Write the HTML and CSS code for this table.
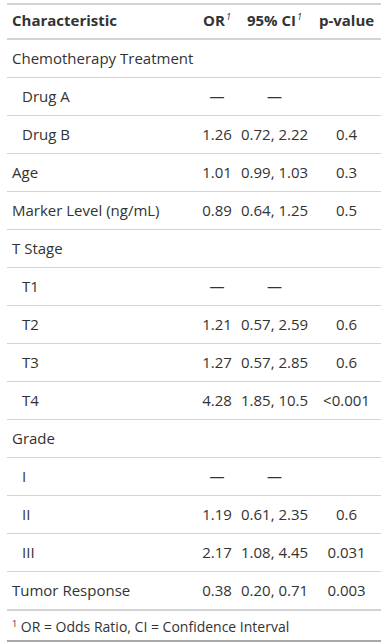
FILE: index.html
```html
<!DOCTYPE html>
<html>
<head>
<meta charset="utf-8">
<link rel="stylesheet" href="styles.css">
</head>
<body>
<table class="gt">
  <colgroup>
    <col class="c-label"><col class="c-or"><col class="c-ci"><col class="c-p">
  </colgroup>
  <thead>
    <tr>
      <th class="left">Characteristic</th>
      <th>OR<sup class="fm">1</sup></th>
      <th>95% CI<sup class="fm">1</sup></th>
      <th>p-value</th>
    </tr>
  </thead>
  <tbody>
    <tr><td class="left">Chemotherapy Treatment</td><td></td><td></td><td></td></tr>
    <tr><td class="left ind">Drug A</td><td>—</td><td>—</td><td></td></tr>
    <tr><td class="left ind">Drug B</td><td>1.26</td><td>0.72, 2.22</td><td>0.4</td></tr>
    <tr><td class="left">Age</td><td>1.01</td><td>0.99, 1.03</td><td>0.3</td></tr>
    <tr><td class="left">Marker Level (ng/mL)</td><td>0.89</td><td>0.64, 1.25</td><td>0.5</td></tr>
    <tr><td class="left">T Stage</td><td></td><td></td><td></td></tr>
    <tr><td class="left ind">T1</td><td>—</td><td>—</td><td></td></tr>
    <tr><td class="left ind">T2</td><td>1.21</td><td>0.57, 2.59</td><td>0.6</td></tr>
    <tr><td class="left ind">T3</td><td>1.27</td><td>0.57, 2.85</td><td>0.6</td></tr>
    <tr><td class="left ind">T4</td><td>4.28</td><td>1.85, 10.5</td><td>&lt;0.001</td></tr>
    <tr><td class="left">Grade</td><td></td><td></td><td></td></tr>
    <tr><td class="left ind">I</td><td>—</td><td>—</td><td></td></tr>
    <tr><td class="left ind">II</td><td>1.19</td><td>0.61, 2.35</td><td>0.6</td></tr>
    <tr><td class="left ind">III</td><td>2.17</td><td>1.08, 4.45</td><td>0.031</td></tr>
    <tr><td class="left">Tumor Response</td><td>0.38</td><td>0.20, 0.71</td><td>0.003</td></tr>
  </tbody>
  <tfoot>
    <tr><td class="foot" colspan="4"><sup class="fn">1</sup> OR = Odds Ratio, CI = Confidence Interval</td></tr>
  </tfoot>
</table>
</body>
</html>
```

FILE: styles.css
```css
html, body {
  margin: 0;
  padding: 0;
  background: #ffffff;
}
body {
  padding: 3px 5px 0 7px;
  font-family: "Open Sans", "Noto Sans", sans-serif;
  color: #333333;
}
.gt {
  border-collapse: collapse;
  table-layout: fixed;
  width: 374px;
  border-top: 2px solid #d3d3d3;
  border-bottom: 2px solid #a8a8a8;
  font-size: 15px;
}
.c-label { width: 190px; }
.c-or { width: 40px; }
.c-ci { width: 75px; }
.c-p { width: 69px; }
th {
  font-weight: bold;
  text-align: center;
  padding: 5px 4px 7px 4px;
  line-height: 21px;
  border-bottom: 2px solid #d3d3d3;
  white-space: nowrap;
  color: #333333;
}
td {
  text-align: center;
  padding: 8px 4px;
  line-height: 21px;
  border-bottom: 1px solid #d3d3d3;
  white-space: nowrap;
}
.left { text-align: left; padding-left: 5px; }
.ind { padding-left: 15px; }
.fm {
  font-style: italic;
  font-weight: normal;
  font-size: 9px;
  line-height: 0;
  vertical-align: 6px;
  margin-left: 1px;
}
tfoot td.foot {
  text-align: left;
  padding: 6px 5px 4px 5px;
  font-size: 14px;
  line-height: 19px;
  border-top: 2px solid #d3d3d3;
  border-bottom: none;
}
.fn {
  font-size: 9px;
  line-height: 0;
  vertical-align: 5px;
}
```
